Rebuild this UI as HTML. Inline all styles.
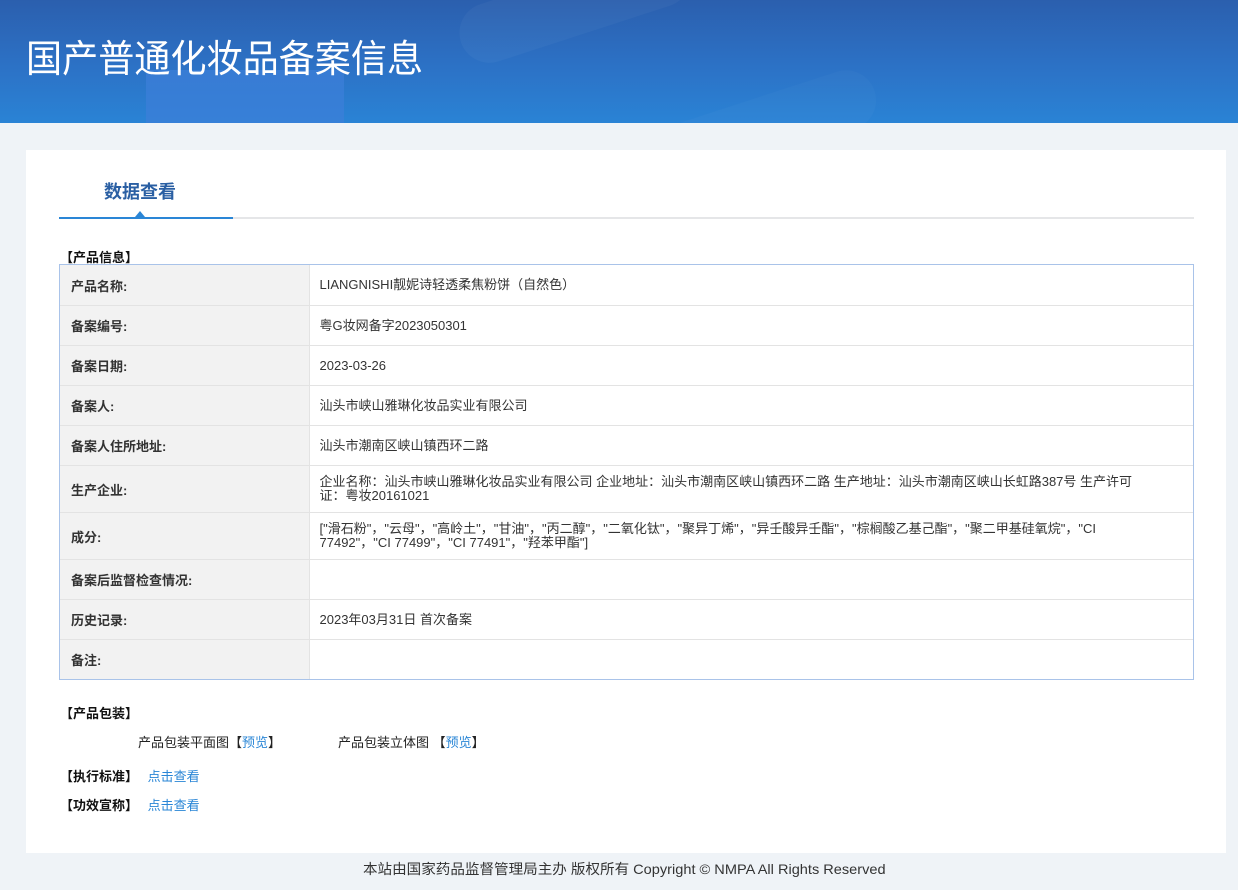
<!DOCTYPE html>
<html><head><meta charset="utf-8">
<style>
*{margin:0;padding:0;box-sizing:border-box}
body{width:1238px;height:890px;background:#eff3f7;font-family:"Liberation Sans","Noto Sans CJK SC",sans-serif;color:#333;position:relative;overflow:hidden}
.hdr{position:absolute;left:0;top:0;width:1238px;height:123px;background:linear-gradient(180deg,#2b5fae 0%,#2c72c6 55%,#2a83d5 100%);overflow:hidden}
.hdr .s1{position:absolute;left:146px;top:70px;width:198px;height:60px;background:#3c7fd8;opacity:.75}
.hdr .s2{position:absolute;left:455px;top:-25px;width:240px;height:60px;border-radius:30px;background:rgba(255,255,255,.035);transform:rotate(-18deg)}
.hdr .s3{position:absolute;left:660px;top:95px;width:220px;height:60px;border-radius:30px;background:rgba(255,255,255,.025);transform:rotate(-18deg)}
.hdr h1{position:absolute;left:26px;top:28px;font-size:38px;font-weight:normal;color:#fff;transform:scaleX(.95);transform-origin:left}
.panel{position:absolute;left:26px;top:150px;width:1200px;height:703px;background:#fff}
.tab{position:absolute;left:78px;top:28px;font-size:18px;font-weight:bold;color:#2a5fa3}
.line{position:absolute;left:33px;top:67px;width:1135px;height:2px;background:#e5e6e8}
.line2{position:absolute;left:33px;top:67px;width:174px;height:2px;background:#2a86d6}
.tri{position:absolute;left:109px;top:61px;width:0;height:0;border-left:5px solid transparent;border-right:5px solid transparent;border-bottom:6px solid #2a86d6}
.sec{position:absolute;left:34px;font-size:13px;font-weight:bold;color:#111}
.tw{position:absolute;left:33px;top:114px;width:1135px;border:1px solid #a9c3e9}
table{width:100%;border-collapse:collapse;font-size:13px}
td{border-bottom:1px solid #e3e3e3;height:40px;vertical-align:middle;padding-top:1px}
tr:last-child td{border-bottom:none}
td.l{width:249px;background:#f2f2f2;font-weight:bold;color:#333;padding-left:11px;border-right:1px solid #e3e3e3}
td.v{padding-left:10px;padding-right:55px;color:#333;line-height:14px}
tr.t td{height:47px}
.pk{position:absolute;top:582px;font-size:13px;color:#222}
a{color:#2a86d6;text-decoration:none}
.lk{position:absolute;left:34px;font-size:13px;color:#111}
.lk b{font-weight:bold;margin-right:6px}
.ft{position:absolute;left:363px;top:859px;font-size:14px;color:#333;white-space:nowrap;transform:scaleX(1.04);transform-origin:left}
</style></head><body>
<div class="hdr"><div class="s2"></div><div class="s3"></div><div class="s1"></div><h1>国产普通化妆品备案信息</h1></div>
<div class="panel">
<div class="tab">数据查看</div>
<div class="line"></div><div class="line2"></div><div class="tri"></div>
<div class="sec" style="top:97px">【产品信息】</div>
<div class="tw"><table>
<tr><td class="l">产品名称:</td><td class="v">LIANGNISHI靓妮诗轻透柔焦粉饼（自然色）</td></tr>
<tr><td class="l">备案编号:</td><td class="v">粤G妆网备字2023050301</td></tr>
<tr><td class="l">备案日期:</td><td class="v">2023-03-26</td></tr>
<tr><td class="l">备案人:</td><td class="v">汕头市峡山雅琳化妆品实业有限公司</td></tr>
<tr><td class="l">备案人住所地址:</td><td class="v">汕头市潮南区峡山镇西环二路</td></tr>
<tr class="t"><td class="l">生产企业:</td><td class="v">企业名称：汕头市峡山雅琳化妆品实业有限公司 企业地址：汕头市潮南区峡山镇西环二路 生产地址：汕头市潮南区峡山长虹路387号 生产许可证：粤妆20161021</td></tr>
<tr class="t"><td class="l">成分:</td><td class="v">["滑石粉"，"云母"，"高岭土"，"甘油"，"丙二醇"，"二氧化钛"，"聚异丁烯"，"异壬酸异壬酯"，"棕榈酸乙基己酯"，"聚二甲基硅氧烷"，"CI 77492"，"CI 77499"，"CI 77491"，"羟苯甲酯"]</td></tr>
<tr><td class="l">备案后监督检查情况:</td><td class="v"></td></tr>
<tr><td class="l">历史记录:</td><td class="v">2023年03月31日 首次备案</td></tr>
<tr><td class="l">备注:</td><td class="v"></td></tr>
</table></div>
<div class="sec" style="top:553px">【产品包装】</div>
<div class="pk" style="left:112px">产品包装平面图【<a>预览</a>】</div>
<div class="pk" style="left:312px">产品包装立体图 【<a>预览</a>】</div>
<div class="lk" style="top:616px"><b>【执行标准】</b> <a>点击查看</a></div>
<div class="lk" style="top:645px"><b>【功效宣称】</b> <a>点击查看</a></div>
</div>
<div class="ft">本站由国家药品监督管理局主办 版权所有 Copyright © NMPA All Rights Reserved</div>
</body></html>
